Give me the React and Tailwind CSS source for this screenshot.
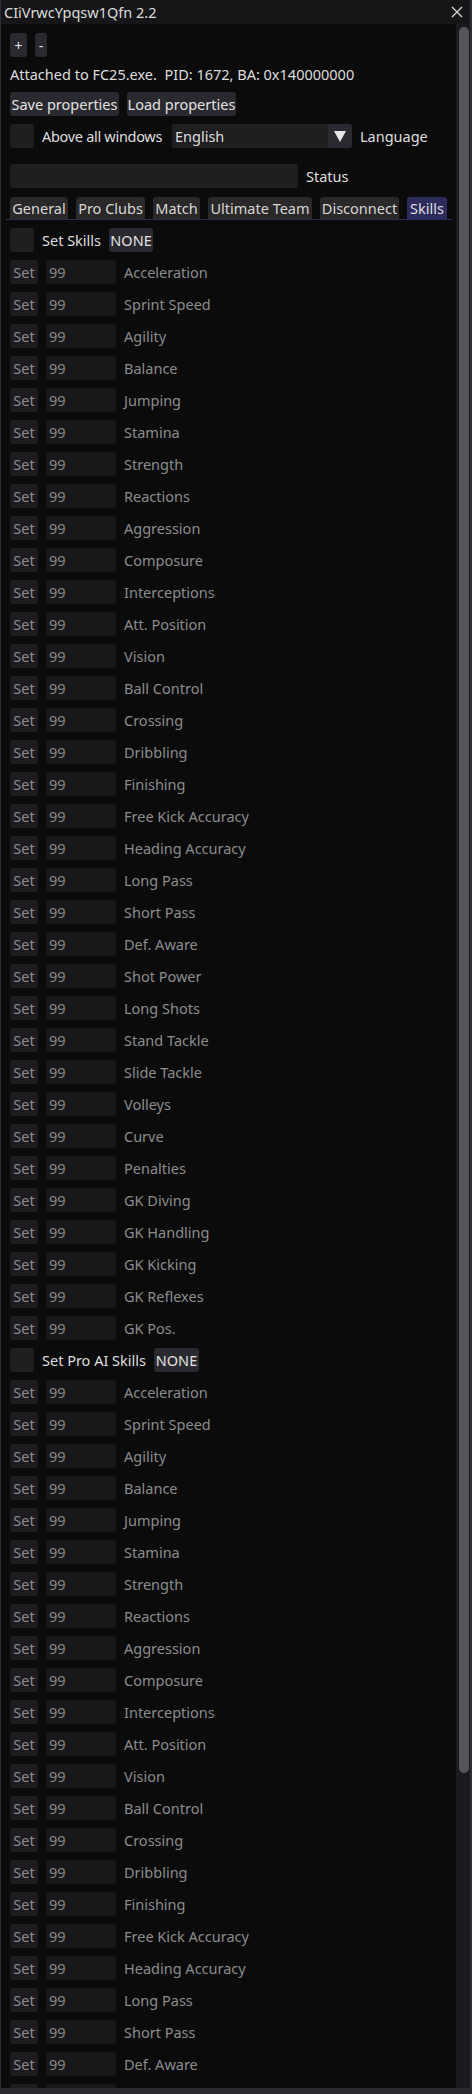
import React from "react"

const skills = [
    "Acceleration", "Sprint Speed", "Agility", "Balance", "Jumping", "Stamina", "Strength",
    "Reactions", "Aggression", "Composure", "Interceptions", "Att. Position", "Vision",
    "Ball Control", "Crossing", "Dribbling", "Finishing", "Free Kick Accuracy", "Heading Accuracy",
    "Long Pass", "Short Pass", "Def. Aware", "Shot Power", "Long Shots", "Stand Tackle",
    "Slide Tackle", "Volleys", "Curve", "Penalties", "GK Diving", "GK Handling", "GK Kicking",
    "GK Reflexes", "GK Pos.",
]

const tabs = [
    { name: "General", w: "w-[58px]" },
    { name: "Pro Clubs", w: "w-[69px]" },
    { name: "Match", w: "w-[47px]" },
    { name: "Ultimate Team", w: "w-[104px]" },
    { name: "Disconnect", w: "w-[79px]" },
]

function Checkbox() {
    return <div className="h-[24px] w-[24px] shrink-0 rounded-[3px] bg-[#1f1f22]" />
}

function Btn({ children, className = "" }) {
    return (
        <div className={"flex h-[24px] shrink-0 items-center justify-center whitespace-nowrap rounded-[3px] bg-[#2a292f] text-[#e2e2e2] " + className}>
            {children}
        </div>
    )
}

function SkillRow({ label }) {
    return (
        <div className="mt-[8px] flex h-[24px] items-center whitespace-nowrap text-[#8c8c8c]">
            <div className="flex h-[24px] w-[28px] items-center justify-center rounded-[3px] bg-[#1c1b20]">Set</div>
            <div className="ml-[8px] flex h-[24px] w-[70px] items-center rounded-[3px] bg-[#18181a] pl-[3px]">99</div>
            <div className="ml-[8px]">{label}</div>
        </div>
    )
}

function SectionHeader({ label, noneWidth }) {
    return (
        <div className="mt-[8px] flex h-[24px] items-center whitespace-nowrap">
            <Checkbox />
            <span className="ml-[8px] text-[#dedede]">{label}</span>
            <Btn className={"ml-[8px] " + noneWidth}>NONE</Btn>
        </div>
    )
}

export default function App() {
    return (
        <div className="flex h-[2094px] w-[472px] flex-col overflow-hidden bg-[#2b2c31] text-[14.5px] leading-none" style={{ fontFamily: "'Noto Sans', sans-serif" }}>
            <div className="flex h-[2088px] flex-col border-l border-r-2 border-[#2f2f34]">
                <div className="flex h-[24px] shrink-0 items-center justify-between bg-[#161618] pl-[3px] pr-[6px] text-[#dcdcdc]">
                    <span className="whitespace-nowrap">CIiVrwcYpqsw1Qfn 2.2</span>
                    <svg width="12" height="12" viewBox="0 0 12 12" className="mr-[1px]">
                        <path d="M1 1 L11 11 M11 1 L1 11" stroke="#d8d8d8" strokeWidth="1.3" />
                    </svg>
                </div>
                <div className="flex min-h-0 flex-1">
                    <div className="min-w-0 flex-1 overflow-hidden bg-[#0b0b0c] pl-[9px] pr-[10px] pt-[9px] text-[#dedede]">
                        <div className="flex h-[24px] gap-[8px]">
                            <Btn className="w-[17px]">+</Btn>
                            <Btn className="w-[12px]">-</Btn>
                        </div>
                        <div className="mt-[8px] flex h-[19px] items-center whitespace-pre">Attached to FC25.exe.  PID: 1672, BA: 0x140000000</div>
                        <div className="mt-[8px] flex gap-[8px]">
                            <Btn className="w-[109px]">Save properties</Btn>
                            <Btn className="w-[109px]">Load properties</Btn>
                        </div>
                        <div className="mt-[8px] flex h-[24px] items-center whitespace-nowrap">
                            <Checkbox />
                            <span className="ml-[8px] w-[130px] shrink-0 tracking-[-0.3px]">Above all windows</span>
                            <div className="flex h-[24px] w-[180px] shrink-0 items-center rounded-[3px] bg-[#1f1f22]">
                                <span className="flex-1 pl-[3px]">English</span>
                                <div className="flex h-[24px] w-[24px] items-center justify-center rounded-r-[3px] bg-[#2a292f]">
                                    <svg width="12" height="11" viewBox="0 0 12 11">
                                        <path d="M0 0 H12 L6 11 Z" fill="#e6e6e6" />
                                    </svg>
                                </div>
                            </div>
                            <span className="ml-[8px]">Language</span>
                        </div>
                        <div className="mt-[16px] flex h-[24px] items-center">
                            <div className="h-[24px] w-[288px] shrink-0 rounded-[3px] bg-[#1f1f22]" />
                            <span className="ml-[8px]">Status</span>
                        </div>
                        <div className="mt-[9px] flex h-[22px] gap-[8px] whitespace-nowrap">
                            {tabs.map((t) => (
                                <div key={t.name} className={"flex h-[22px] shrink-0 items-center justify-center rounded-t-[3px] bg-[#2a2829] text-[#d6d6d6] " + t.w}>
                                    {t.name}
                                </div>
                            ))}
                            <div className="flex h-[22px] w-[40px] shrink-0 items-center justify-center rounded-t-[3px] bg-[#2d2b5d]">Skills</div>
                        </div>
                        <div className="ml-[-4px] mr-[-6px] h-[1px] bg-[#2d2b5d]" />
                        <SectionHeader label="Set Skills" noneWidth="w-[44px]" />
                        {skills.map((s) => (
                            <SkillRow key={"a" + s} label={s} />
                        ))}
                        <SectionHeader label="Set Pro AI Skills" noneWidth="w-[45px]" />
                        {skills.map((s) => (
                            <SkillRow key={"b" + s} label={s} />
                        ))}
                    </div>
                    <div className="w-[14px] shrink-0 bg-[#1b1a1f] pl-[3px] pr-[1px] pt-[3px]">
                        <div className="h-[1746px] rounded-full bg-[#56555b]" />
                    </div>
                </div>
            </div>
        </div>
    )
}
